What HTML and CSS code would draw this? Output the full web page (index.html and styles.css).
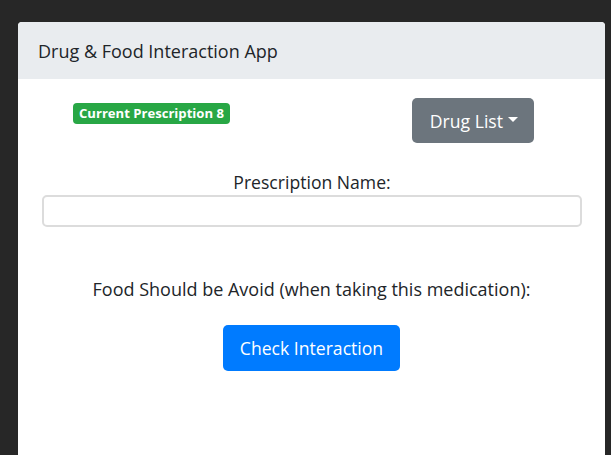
FILE: index.html
```html
<!DOCTYPE html>
<html>
<head>
<meta charset="utf-8">
<link rel="stylesheet" href="styles.css">
</head>
<body>
<div class="card">
  <div class="card-header">Drug &amp; Food Interaction App</div>
  <div class="card-body">
    <div class="top-row">
      <span class="badge">Current Prescription 8</span>
      <button class="btn btn-secondary">Drug List<span class="caret"></span></button>
    </div>
    <div class="field">
      <label class="field-label" for="pname">Prescription Name:</label>
      <input class="field-input" id="pname" type="text">
    </div>
    <p class="food">Food Should be Avoid (when taking this medication):</p>
    <div class="actions">
      <button class="btn btn-primary">Check Interaction</button>
    </div>
  </div>
</div>
</body>
</html>
```
FILE: styles.css
```css
html, body {
  margin: 0;
  padding: 0;
  background: #272727;
  height: 100%;
  overflow: hidden;
}
body {
  font-family: "Open Sans", "Noto Sans", sans-serif;
  color: #212529;
  padding-top: 22px;
  padding-left: 18px;
  padding-right: 6px;
  box-sizing: border-box;
}
.card {
  background: #fff;
  border-radius: 4px 4px 0 0;
  height: 440px;
}
.card-header {
  background: #e9ecef;
  height: 57px;
  box-sizing: border-box;
  padding: 0 20px;
  display: flex;
  align-items: center;
  font-size: 18px;
  border-radius: 4px 4px 0 0;
}
.top-row {
  display: flex;
  justify-content: space-between;
  align-items: flex-start;
  padding: 19px 71px 0 55px;
}
.badge {
  background: #28a745;
  color: #fff;
  font-weight: 700;
  font-size: 13.1px;
  line-height: 21px;
  padding: 0 6px;
  border-radius: 4px;
  margin-top: 5px;
}
.btn {
  border: none;
  color: #fff;
  font-family: inherit;
  font-size: 17.6px;
  padding: 0 16px;
  height: 46px;
  border-radius: 5px;
  display: inline-flex;
  align-items: center;
}
.btn-secondary {
  background: #6c757d;
  height: 45px;
  padding-left: 18px;
}
.btn-primary {
  background: #007bff;
  padding: 0 17px;
}
.caret {
  display: inline-block;
  width: 0;
  height: 0;
  border-top: 5px solid #fff;
  border-left: 5px solid transparent;
  border-right: 5px solid transparent;
  margin-left: 5px;
  margin-top: -3px;
}
.field {
  display: flex;
  flex-direction: column;
  align-items: center;
  margin-top: 27px;
  padding: 0 23px 0 24px;
}
.field-label {
  font-size: 17.6px;
  line-height: 25px;
}
.field-input {
  align-self: stretch;
  height: 32px;
  box-sizing: border-box;
  border: 2px solid #dcdcdc;
  border-radius: 5px;
  margin-top: 0;
  outline: none;
}
.food {
  text-align: center;
  font-size: 18px;
  line-height: 25px;
  margin: 50px 0 0;
}
.actions {
  display: flex;
  justify-content: center;
  margin-top: 23px;
}
```
